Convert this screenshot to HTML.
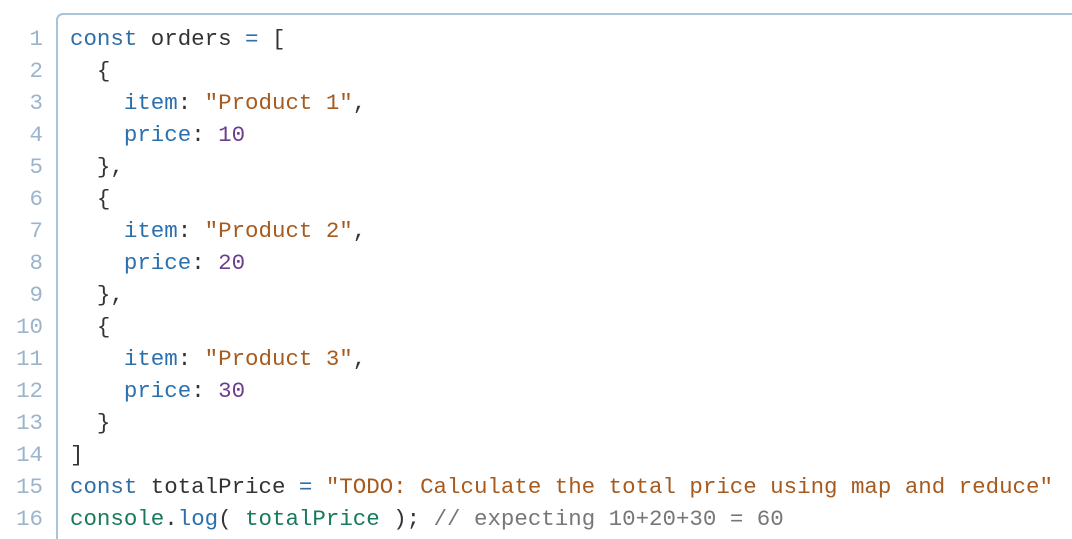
<!DOCTYPE html>
<html><head><style>
html,body{margin:0;padding:0;background:#fff;width:1072px;height:539px;overflow:hidden;position:relative}
.box{position:absolute;left:56px;top:13px;width:1016px;height:526px;border:2px solid #a9c3d8;border-right:none;border-bottom:none;border-top-left-radius:7px;box-sizing:border-box}
.ln{position:absolute;left:0;top:23px;width:43px;text-align:right;color:#9bb4cc}
.code{position:absolute;left:70px;top:23px;color:#333;white-space:pre}
.ln,.code{font-family:"Liberation Mono","DejaVu Sans Mono",monospace;font-size:22.45px;line-height:32px}
.k{color:#2f6ea6}.s{color:#a65a1e}.n{color:#6b3f8c}.p{color:#2a70b0}.t{color:#18795c}.c{color:#777}
</style></head><body>
<div class="box"></div>
<div class="ln">1<br>2<br>3<br>4<br>5<br>6<br>7<br>8<br>9<br>10<br>11<br>12<br>13<br>14<br>15<br>16</div>
<div class="code"><span class="k">const</span> orders <span class="k">=</span> [
  {
    <span class="p">item</span>: <span class="s">"Product 1"</span>,
    <span class="p">price</span>: <span class="n">10</span>
  },
  {
    <span class="p">item</span>: <span class="s">"Product 2"</span>,
    <span class="p">price</span>: <span class="n">20</span>
  },
  {
    <span class="p">item</span>: <span class="s">"Product 3"</span>,
    <span class="p">price</span>: <span class="n">30</span>
  }
]
<span class="k">const</span> totalPrice <span class="k">=</span> <span class="s">"TODO: Calculate the total price using map and reduce"</span>
<span class="t">console</span>.<span class="p">log</span>( <span class="t">totalPrice</span> ); <span class="c">// expecting 10+20+30 = 60</span></div>
</body></html>
